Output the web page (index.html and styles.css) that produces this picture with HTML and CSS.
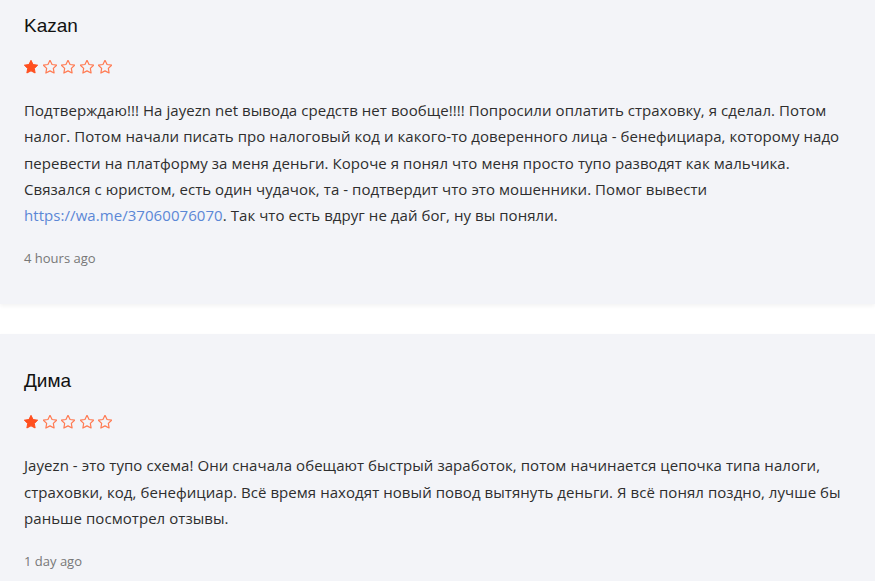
FILE: index.html
```html
<!DOCTYPE html>
<html lang="ru">
<head>
<meta charset="utf-8">
<title>Отзывы</title>
<link rel="stylesheet" href="styles.css">
</head>
<body>
<div class="list">
  <article class="review">
    <h3 class="review-name">Kazan</h3>
    <div class="stars">
      <svg class="star" viewBox="1.5 1.5 21 21"><path class="fill" d="M12 2l3.09 6.26L22 9.27l-5 4.87 1.18 6.88L12 17.77l-6.18 3.25L7 14.14 2 9.27l6.91-1.01L12 2z"/></svg>
      <svg class="star" viewBox="1.5 1.5 21 21"><path class="empty" d="M12 2l3.09 6.26L22 9.27l-5 4.87 1.18 6.88L12 17.77l-6.18 3.25L7 14.14 2 9.27l6.91-1.01L12 2z"/></svg>
      <svg class="star" viewBox="1.5 1.5 21 21"><path class="empty" d="M12 2l3.09 6.26L22 9.27l-5 4.87 1.18 6.88L12 17.77l-6.18 3.25L7 14.14 2 9.27l6.91-1.01L12 2z"/></svg>
      <svg class="star" viewBox="1.5 1.5 21 21"><path class="empty" d="M12 2l3.09 6.26L22 9.27l-5 4.87 1.18 6.88L12 17.77l-6.18 3.25L7 14.14 2 9.27l6.91-1.01L12 2z"/></svg>
      <svg class="star" viewBox="1.5 1.5 21 21"><path class="empty" d="M12 2l3.09 6.26L22 9.27l-5 4.87 1.18 6.88L12 17.77l-6.18 3.25L7 14.14 2 9.27l6.91-1.01L12 2z"/></svg>
    </div>
    <p class="review-text">Подтверждаю!!! На jayezn net вывода средств нет вообще!!!! Попросили оплатить страховку, я сделал. Потом налог. Потом начали писать про налоговый код и какого-то доверенного лица - бенефициара, которому надо перевести на платформу за меня деньги. Короче я понял что меня просто тупо разводят как мальчика. Связался с юристом, есть один чудачок, та - подтвердит что это мошенники. Помог вывести <a class="link" href="#">https://wa.me/37060076070</a>. Так что есть вдруг не дай бог, ну вы поняли.</p>
    <div class="review-time">4 hours ago</div>
  </article>
  <article class="review">
    <h3 class="review-name">Дима</h3>
    <div class="stars">
      <svg class="star" viewBox="1.5 1.5 21 21"><path class="fill" d="M12 2l3.09 6.26L22 9.27l-5 4.87 1.18 6.88L12 17.77l-6.18 3.25L7 14.14 2 9.27l6.91-1.01L12 2z"/></svg>
      <svg class="star" viewBox="1.5 1.5 21 21"><path class="empty" d="M12 2l3.09 6.26L22 9.27l-5 4.87 1.18 6.88L12 17.77l-6.18 3.25L7 14.14 2 9.27l6.91-1.01L12 2z"/></svg>
      <svg class="star" viewBox="1.5 1.5 21 21"><path class="empty" d="M12 2l3.09 6.26L22 9.27l-5 4.87 1.18 6.88L12 17.77l-6.18 3.25L7 14.14 2 9.27l6.91-1.01L12 2z"/></svg>
      <svg class="star" viewBox="1.5 1.5 21 21"><path class="empty" d="M12 2l3.09 6.26L22 9.27l-5 4.87 1.18 6.88L12 17.77l-6.18 3.25L7 14.14 2 9.27l6.91-1.01L12 2z"/></svg>
      <svg class="star" viewBox="1.5 1.5 21 21"><path class="empty" d="M12 2l3.09 6.26L22 9.27l-5 4.87 1.18 6.88L12 17.77l-6.18 3.25L7 14.14 2 9.27l6.91-1.01L12 2z"/></svg>
    </div>
    <p class="review-text">Jayezn - это тупо схема! Они сначала обещают быстрый заработок, потом начинается цепочка типа налоги, страховки, код, бенефициар. Всё время находят новый повод вытянуть деньги. Я всё понял поздно, лучше бы раньше посмотрел отзывы.</p>
    <div class="review-time">1 day ago</div>
  </article>
</div>
</body>
</html>
```

FILE: styles.css
```css
html, body {
  margin: 0;
  padding: 0;
  background: #ffffff;
}

body {
  font-family: "Open Sans", "Noto Sans", sans-serif;
  color: #333;
  overflow: hidden;
}

.list {
  display: flex;
  flex-direction: column;
  gap: 30px;
  margin-top: -21px;
}

.review {
  background: #f3f4f8;
  padding: 35px 24px 36px 24px;
  box-shadow: 0 2px 4px rgba(0, 0, 0, 0.05);
}

.review-name {
  margin: 0;
  font-family: "Liberation Sans", Arial, sans-serif;
  font-weight: 400;
  font-size: 19px;
  line-height: 24px;
  color: #111;
}

.stars {
  display: flex;
  gap: 4.5px;
  margin-top: 22px;
  height: 14px;
}

.star {
  width: 14px;
  height: 14px;
  display: block;
}

.star .fill {
  fill: #ff4f1f;
  stroke: #ff4f1f;
  stroke-width: 1.5;
  stroke-linejoin: round;
}

.star .empty {
  fill: none;
  stroke: #ff7a52;
  stroke-width: 1.8;
  stroke-linejoin: round;
}

.review-text {
  margin: 23px 0 0 0;
  font-size: 15px;
  letter-spacing: 0.06px;
  line-height: 26.25px;
  color: #2e2e2e;
}

.link {
  color: #5b87d6;
  text-decoration: none;
}

.review-time {
  margin-top: 20px;
  font-size: 13px;
  line-height: 20px;
  color: #777;
}
```
